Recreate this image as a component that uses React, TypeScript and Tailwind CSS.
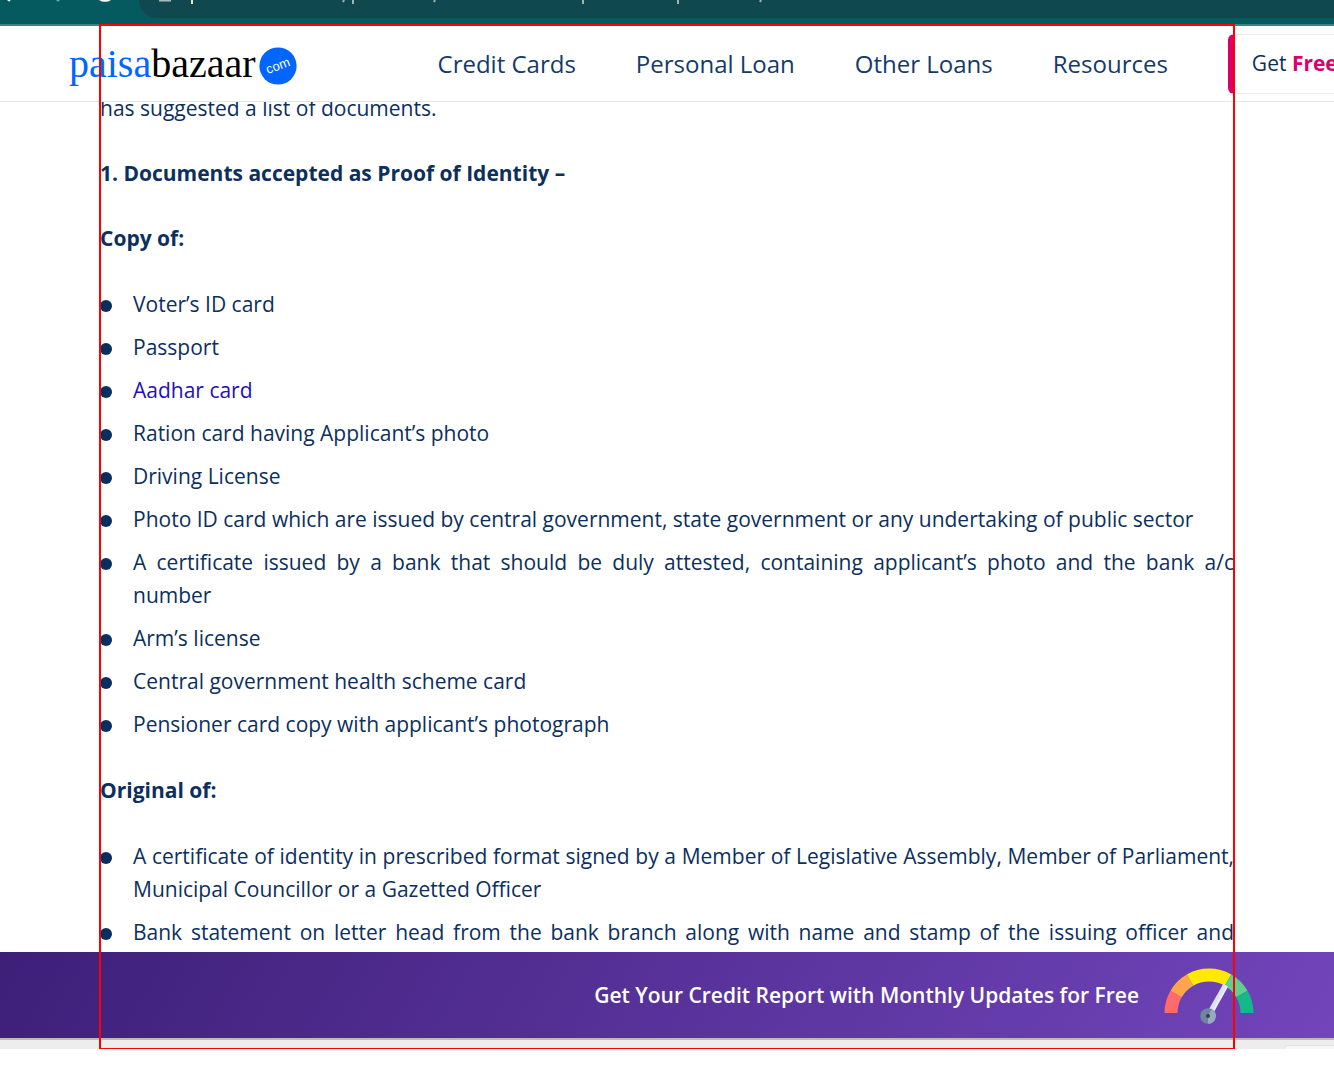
import type { ReactNode } from "react";

const navLinks = ["Credit Cards", "Personal Loan", "Other Loans", "Resources"];

const copies: ReactNode[] = [
  "Voter’s ID card",
  "Passport",
  <a href="#aadhar" className="text-[#1f10b8]">Aadhar card</a>,
  "Ration card having Applicant’s photo",
  "Driving License",
  "Photo ID card which are issued by central government, state government or any undertaking of public sector",
  "A certificate issued by a bank that should be duly attested, containing applicant’s photo and the bank a/c number",
  "Arm’s license",
  "Central government health scheme card",
  "Pensioner card copy with applicant’s photograph",
];

const originals: ReactNode[] = [
  "A certificate of identity in prescribed format signed by a Member of Legislative Assembly, Member of Parliament, Municipal Councillor or a Gazetted Officer",
  <span className="block [text-align-last:justify]">
    Bank statement on letter head from the bank branch along with name and stamp of the issuing officer and
  </span>,
];

function BrowserStrip() {
  return (
    <div className="flex h-[26px] shrink-0 border-b-2 border-[#3f8286] bg-[#055a60]">
      <svg className="h-[18px] w-[139px] shrink-0" viewBox="0 0 139 18" fill="none" aria-hidden="true">
        <path d="M6 -2 L10 1" stroke="#fff" strokeWidth="2" />
        <path d="M56 -1 L59 1" stroke="#7fa9ac" strokeWidth="2" />
        <path d="M98 -3 A9 9 0 0 0 112 -3" stroke="#fff" strokeWidth="3" />
      </svg>
      <div className="h-[18px] flex-1 overflow-hidden rounded-bl-[24px] bg-[#0f484e]">
        <svg className="h-[18px] w-[640px]" viewBox="139 0 640 18" fill="none" aria-hidden="true">
          <path d="M159 0 h12" stroke="#a9bdbf" strokeWidth="3" />
          <path d="M192 0 V4" stroke="#f1e7c4" strokeWidth="2" />
          <path d="M353 0 V4 M583 0 V4 M678 0 V4" stroke="#9fb3b0" strokeWidth="2" />
          <path d="M344 0 l-1 2 M435 0 l-1 2 M761 0 l-1 2" stroke="#9fb3b0" strokeWidth="2" />
        </svg>
      </div>
    </div>
  );
}

function Logo() {
  return (
    <a href="#home" className="flex shrink-0 items-center gap-[3px] font-['Liberation_Serif',serif] text-[40px] leading-[48px] text-black">
      <span>
        <span className="text-[#0066ff]">paisa</span>bazaar
      </span>
      <svg className="mt-[4px] h-[38px] w-[38px]" viewBox="0 0 38 38" aria-hidden="true">
        <circle cx="19" cy="19" r="18.6" fill="#0066ff" />
        <text x="19" y="23" textAnchor="middle" transform="rotate(-20 19 19)" fill="#fff" fontFamily="Liberation Sans, sans-serif" fontSize="13">
          com
        </text>
      </svg>
    </a>
  );
}

function Header() {
  return (
    <header className="z-10 flex h-[76px] shrink-0 items-center overflow-hidden whitespace-nowrap border-b border-[#e6e6e6] bg-white pl-[69px] pt-px">
      <Logo />
      <nav className="ml-[141px] flex gap-[60px] text-[24px] leading-[36px] text-[#153a69]">
        {navLinks.map((label) => (
          <a key={label} href="#nav">{label}</a>
        ))}
      </nav>
      <button
        type="button"
        className="ml-[60px] h-[60px] w-[240px] shrink-0 rounded-[6px] border border-l-[7px] border-[#ececec] border-l-[#d9006c] pl-[17px] text-left text-[21px] font-medium text-[#0c2f5e]"
      >
        Get <span className="font-bold text-[#d9006c]">Free</span>
      </button>
    </header>
  );
}

function BulletList({ items }: { items: ReactNode[] }) {
  return (
    <ul className="flex flex-col gap-[10px] py-px">
      {items.map((item, i) => (
        <li key={i} className="flex gap-[21px]">
          <span className="mt-[12px] h-3 w-3 shrink-0 rounded-full bg-[#052f5f]" />
          <span className="flex-1 text-justify">{item}</span>
        </li>
      ))}
    </ul>
  );
}

function Gauge() {
  return (
    <svg className="mt-[5px] h-[60px] w-[90px] shrink-0" viewBox="0 0 90 60" fill="none" aria-hidden="true">
      <g strokeWidth="13">
        <path d="M7 45 A38 38 0 0 1 12.1 26" stroke="#ff6b6b" />
        <path d="M12.1 26 A38 38 0 0 1 26 12.1" stroke="#ffa64d" />
        <path d="M26 12.1 A38 38 0 0 1 64 12.1" stroke="#ffe900" />
        <path d="M64 12.1 A38 38 0 0 1 77.9 26" stroke="#5fd08f" />
        <path d="M77.9 26 A38 38 0 0 1 83 45" stroke="#14b98a" />
      </g>
      <path d="M44 48 L61.5 17" stroke="#dde1ec" strokeWidth="5" />
      <path d="M46 49 L63 18.5" stroke="#eceef6" strokeWidth="2" />
      <circle cx="44" cy="48" r="7.8" fill="#71869e" />
      <path d="M47.9 41.2 A7.8 7.8 0 0 1 44 55.8 L44 48 Z" fill="#98a9c2" />
      <circle cx="44" cy="48" r="2" fill="#2d3e50" />
    </svg>
  );
}

export default function App() {
  return (
    <div className="relative flex h-screen flex-col overflow-hidden bg-white pb-[25px] font-['Open_Sans',sans-serif]">
      <BrowserStrip />
      <Header />
      <main className="min-h-0 flex-1 overflow-hidden px-[100px] text-[21px] leading-[33px] text-[#0c2f5e]">
        <div className="-mt-[10px] flex flex-col gap-8">
          <p>has suggested a list of documents.</p>
          <h2 className="font-bold">1. Documents accepted as Proof of Identity –</h2>
          <h3 className="font-bold">Copy of:</h3>
          <BulletList items={copies} />
          <h3 className="font-bold">Original of:</h3>
          <BulletList items={originals} />
        </div>
      </main>
      <aside className="flex h-[86px] shrink-0 items-center justify-end gap-[25px] bg-[linear-gradient(120deg,#3d1f78,#7245bb)] pr-[80px] text-[21px] leading-[33px] font-semibold text-white">
        <p>Get Your Credit Report with Monthly Updates for Free</p>
        <Gauge />
      </aside>
      <div className="flex h-[11px] shrink-0 items-end justify-end border-t-2 border-[#bdb9bf] bg-[#ededed]">
        <div className="h-[4px] w-[50px] rounded-tl-[4px] border-l border-t border-[#e2e2e2] bg-[#f7f7f7]" />
      </div>
      <div className="pointer-events-none absolute bottom-[25px] left-[99px] right-[99px] top-[24px] z-20 border-2 border-b border-[#ff0000]" />
    </div>
  );
}
